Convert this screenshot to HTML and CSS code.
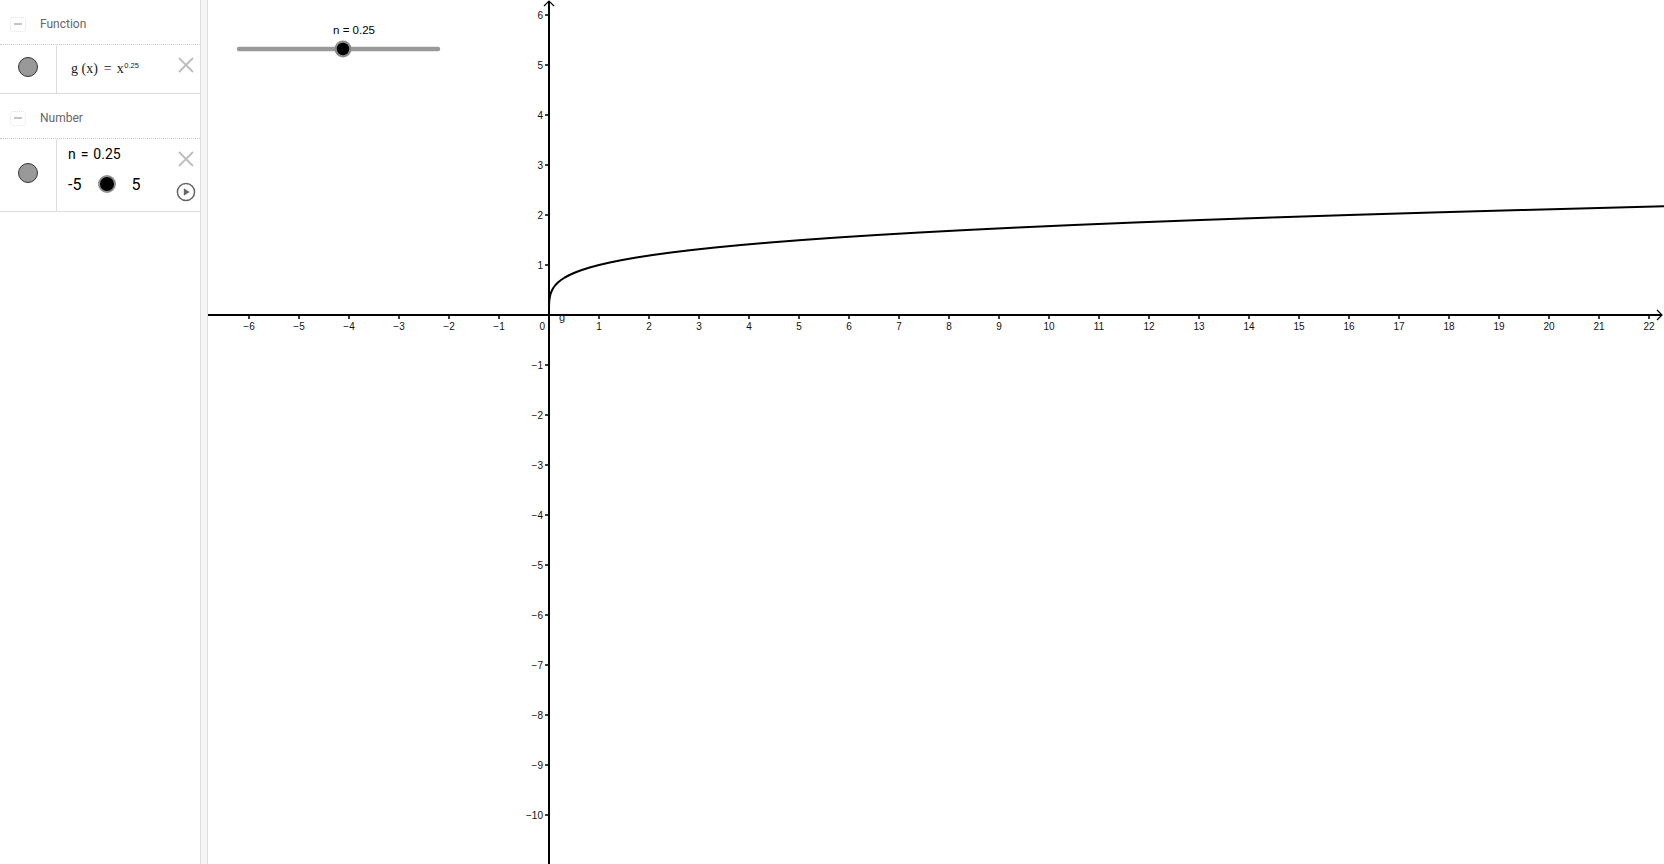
FILE: index.html
```html
<!DOCTYPE html>
<html>
<head>
<meta charset="utf-8">
<title>GeoGebra</title>
<link rel="stylesheet" href="styles.css">
</head>
<body>
<aside class="av">
  <div class="group-head"><span class="toggle"><span class="bar"></span></span><span class="gtitle">Function</span></div>
  <div class="item item-func">
    <div class="marble-col"><span class="marble"></span></div>
    <div class="content content-func"><span class="formula">g&nbsp;(x)<span class="eq">=</span>x<sup>0.25</sup></span></div>
    <div class="actions">
      <svg class="xicon" width="16" height="16" viewBox="0 0 16 16"><path d="M1 1L15 15M15 1L1 15"/></svg>
    </div>
  </div>
  <div class="group-head"><span class="toggle"><span class="bar"></span></span><span class="gtitle">Number</span></div>
  <div class="item item-num">
    <div class="marble-col"><span class="marble"></span></div>
    <div class="content content-num">
      <div class="num-def">n = 0.25</div>
      <div class="av-slider"><span class="lim">-5</span><span class="knob"></span><span class="lim lim-max">5</span></div>
    </div>
    <div class="actions">
      <svg class="xicon" width="16" height="16" viewBox="0 0 16 16"><path d="M1 1L15 15M15 1L1 15"/></svg>
      <svg class="play" width="20" height="20" viewBox="0 0 20 20"><circle cx="10" cy="10" r="8.6"/><path d="M7.8 6.2V13.8L13.6 10Z"/></svg>
    </div>
  </div>
</aside>
<div class="splitter"></div>
<main class="ev">
<svg class="plot" width="1456" height="864" viewBox="208 0 1456 864">
  <g class="slider">
    <text class="slabel" x="354" y="34">n = 0.25</text>
    <path class="strack" d="M239 49H438"/>
    <circle class="sring" cx="343" cy="49" r="8.5"/>
    <circle class="sdot" cx="343" cy="49" r="6.2"/>
  </g>
  <path class="axis" d="M208 315H1662M549 1V864"/>
  <path class="arrow" d="M544 6L549 1L554 6M1657 310L1662 315L1657 320"/>
  <path class="ticks" d="M249 315v4M299 315v4M349 315v4M399 315v4M449 315v4M499 315v4M599 315v4M649 315v4M699 315v4M749 315v4M799 315v4M849 315v4M899 315v4M949 315v4M999 315v4M1049 315v4M1099 315v4M1149 315v4M1199 315v4M1249 315v4M1299 315v4M1349 315v4M1399 315v4M1449 315v4M1499 315v4M1549 315v4M1599 315v4M1649 315v4M545 15h4M545 65h4M545 115h4M545 165h4M545 215h4M545 265h4M545 365h4M545 415h4M545 465h4M545 515h4M545 565h4M545 615h4M545 665h4M545 715h4M545 765h4M545 815h4"/>
  <g class="xl">
    <text x="249" y="330">−6</text><text x="299" y="330">−5</text><text x="349" y="330">−4</text><text x="399" y="330">−3</text><text x="449" y="330">−2</text><text x="499" y="330">−1</text>
    <text x="599" y="330">1</text><text x="649" y="330">2</text><text x="699" y="330">3</text><text x="749" y="330">4</text><text x="799" y="330">5</text><text x="849" y="330">6</text><text x="899" y="330">7</text><text x="949" y="330">8</text><text x="999" y="330">9</text><text x="1049" y="330">10</text><text x="1099" y="330">11</text><text x="1149" y="330">12</text><text x="1199" y="330">13</text><text x="1249" y="330">14</text><text x="1299" y="330">15</text><text x="1349" y="330">16</text><text x="1399" y="330">17</text><text x="1449" y="330">18</text><text x="1499" y="330">19</text><text x="1549" y="330">20</text><text x="1599" y="330">21</text><text x="1649" y="330">22</text>
  </g>
  <g class="yl">
    <text x="543" y="18.5">6</text><text x="543" y="68.5">5</text><text x="543" y="118.5">4</text><text x="543" y="168.5">3</text><text x="543" y="218.5">2</text><text x="543" y="268.5">1</text>
    <text x="545" y="330">0</text>
    <text x="543" y="368.5">−1</text><text x="543" y="418.5">−2</text><text x="543" y="468.5">−3</text><text x="543" y="518.5">−4</text><text x="543" y="568.5">−5</text><text x="543" y="618.5">−6</text><text x="543" y="668.5">−7</text><text x="543" y="718.5">−8</text><text x="543" y="768.5">−9</text><text x="543" y="818.5">−10</text>
  </g>
  <path class="curve" d="M549 315L549.0003 312.5L549.005 310L549.025 307.5L549.08 305L549.195 302.5L549.405 300L549.75 297.5L550.28 295L551.05 292.5L552.125 290L553.575 287.5L555.48 285L557.925 282.5L561.005 280L564.82 277.5L569.48 275L575.1 272.5L581.805 270L589.725 267.5L599 265L609.78 262.5L622.2 260L636.45 257.5L652.68 255L671.07 252.5L691.8 250L715.08 247.5L741.08 245L770 242.5L802.125 240L837.6 237.5L876.68 235L919.6 232.5L966.6 230L1017.9 227.5L1073.88 225L1134.7 222.5L1200.6 220L1271.95 217.5L1349 215L1432.05 212.5L1521.4 210L1617.4 207.5L1720.3 205"/>
  <text class="glabel" x="559" y="321">g</text>
</svg>
</main>
</body>
</html>
```

FILE: styles.css
```css
html, body {
  margin: 0;
  padding: 0;
  background: #fff;
}
body {
  display: flex;
  height: 864px;
  overflow: hidden;
  font-family: Roboto, "Liberation Sans", sans-serif;
  color: #000;
}
.av {
  width: 200px;
  flex: none;
}
.group-head {
  height: 40px;
  padding-top: 4px;
  border-bottom: 1px dotted #c8c8c8;
  display: flex;
  align-items: center;
}
.toggle {
  width: 14px;
  height: 13px;
  margin-left: 10px;
  border: 1px dotted #e2e2e2;
  border-radius: 3px;
  display: flex;
  align-items: center;
  justify-content: center;
}
.toggle .bar {
  width: 8px;
  height: 2px;
  background: #c4c4c4;
}
.gtitle {
  margin-left: 14px;
  font-size: 12px;
  color: #666;
}
.item {
  display: flex;
  border-bottom: 1px solid #dcdcdc;
}
.item-func {
  height: 48px;
}
.item-num {
  height: 72px;
}
.marble-col {
  width: 56px;
  flex: none;
  border-right: 1px solid #dcdcdc;
  display: flex;
  justify-content: center;
  align-items: center;
  padding-bottom: 4px;
  box-sizing: content-box;
}
.item .marble-col {
  height: calc(100% - 4px);
}
.marble {
  width: 20px;
  height: 20px;
  box-sizing: border-box;
  border-radius: 50%;
  background: #999;
  border: 1px solid #333;
}
.content {
  flex: 1;
  padding-left: 11px;
  min-width: 0;
}
.content-func {
  display: flex;
  align-items: center;
}
.formula {
  margin-left: 3px;
  font-family: "Liberation Serif", serif;
  font-size: 14px;
  color: #222;
  white-space: nowrap;
}
.formula .eq {
  margin: 0 5px 0 6px;
}
.formula sup {
  font-family: "Liberation Sans", sans-serif;
  font-size: 7.5px;
  vertical-align: 5px;
  line-height: 0;
  margin-left: 0.5px;
}
.content-num {
  padding-top: 5px;
}
.num-def {
  font-size: 14px;
  line-height: 20px;
  word-spacing: 1.5px;
}
.av-slider {
  margin-top: 9px;
  height: 22px;
  display: flex;
  align-items: center;
}
.lim {
  font-size: 16px;
}
.knob {
  width: 18px;
  height: 18px;
  box-sizing: border-box;
  margin-left: 17px;
  border-radius: 50%;
  background: #000;
  border: 2.5px solid #8f8f8f;
}
.lim-max {
  margin-left: 15px;
}
.actions {
  width: 28px;
  flex: none;
  padding-top: 12px;
  display: flex;
  flex-direction: column;
  align-items: center;
}
.xicon path {
  stroke: #bdbdbd;
  stroke-width: 1.8;
  fill: none;
}
.play {
  margin-top: 15px;
}
.play circle {
  fill: none;
  stroke: #666;
  stroke-width: 1.5;
}
.play path {
  fill: #666;
}
.splitter {
  width: 6px;
  flex: none;
  background: #f5f5f5;
  border-left: 1px solid #dcdcdc;
  border-right: 1px solid #dcdcdc;
}
.ev {
  flex: 1;
  min-width: 0;
}
.plot {
  display: block;
  font-family: "Liberation Sans", Arial, sans-serif;
}
.slabel {
  font-size: 11.5px;
  text-anchor: middle;
  fill: #000;
}
.strack {
  stroke: #9a9a9a;
  stroke-width: 4.5;
  stroke-linecap: round;
  fill: none;
}
.sring {
  fill: #8a8a8a;
}
.sdot {
  fill: #000;
}
.axis {
  stroke: #000;
  stroke-width: 2;
  fill: none;
}
.arrow {
  stroke: #000;
  stroke-width: 1.2;
  fill: none;
}
.ticks {
  stroke: #000;
  stroke-width: 1.5;
  fill: none;
}
.xl text, .yl text {
  font-size: 10px;
  fill: #111;
}
.xl text {
  text-anchor: middle;
}
.yl text {
  text-anchor: end;
}
.curve {
  stroke: #000;
  stroke-width: 2;
  fill: none;
  stroke-linejoin: round;
}
.glabel {
  font-size: 11px;
  fill: #222;
}
```
